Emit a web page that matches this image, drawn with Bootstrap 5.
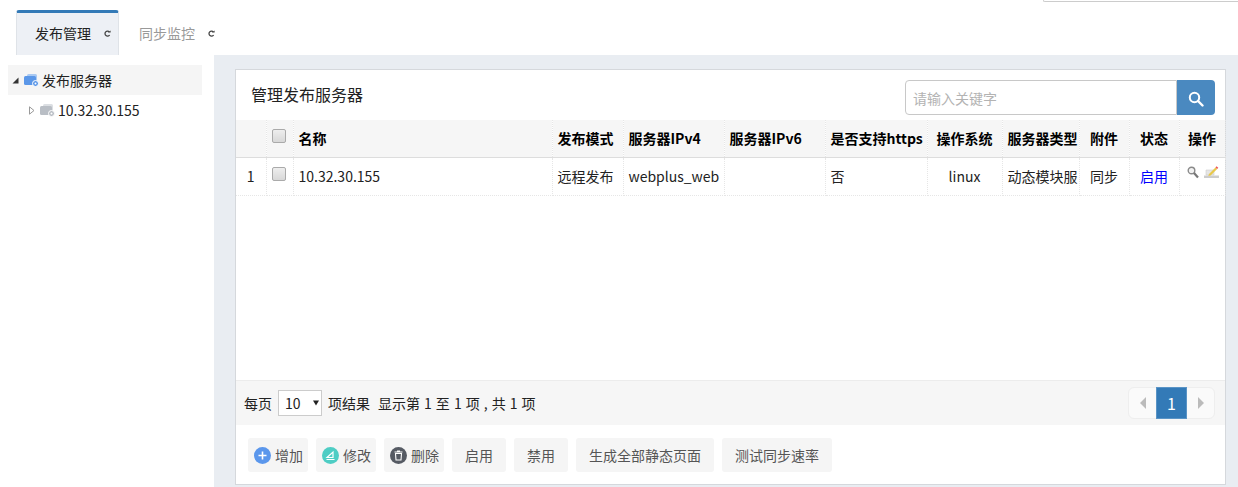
<!DOCTYPE html>
<html lang="zh-CN">
<head>
<meta charset="utf-8">
<title>发布服务器</title>
<link rel="stylesheet" href="https://cdn.jsdelivr.net/npm/bootstrap@5.3.0/dist/css/bootstrap.min.css">
<style>
html,body{height:487px;overflow:hidden;}
body{font-family:"Noto Sans CJK SC","Open Sans",sans-serif;font-size:14px;color:#222;background:#fff;}
.top-stub{width:195px;height:2px;margin-left:auto;border:1px solid #ccc;border-top:0;border-right:0;border-radius:0 0 0 3px;}
.tab-strip{height:53px;padding:8px 0 0 16px;}
.tab-item{height:45px;width:103px;padding:0 0 2px 18px;background:#edf0f5;border:1px solid #dfe3e8;border-top:3px solid #337ab7;border-bottom:0;border-radius:3px 3px 0 0;color:#222;}
.tab-item.off{background:#fff;border-color:transparent;color:#999;padding-left:19px;}
.tab-icon{margin-left:13px;}
.work{height:432px;}
.side{width:214px;padding:10px 12px 0 8px;flex:none;}
.tree-row{height:30px;padding-left:4px;gap:3px;}
.tree-row.sel{background:#f5f5f5;}
.tree-row.sub{padding-left:21px;height:31px;}
.tree-ico{margin-left:2px;}
.content{flex:1;background:#e9edf2;padding:14px 12px 2px 21px;min-width:0;}
.panel-box{height:416px;background:#fff;border:1px solid #d5d8dc;}
.panel-head{height:50px;padding:10px 10px 0 15px;}
.panel-title{font-size:16px;padding-top:2px;}
.search-wrap{width:310px;height:35px;}
.search-wrap .form-control{height:35px;min-width:0;font-size:14px;border-color:#c8c8c8;padding:0 7px;border-radius:4px 0 0 4px;}
.search-wrap .form-control::placeholder{color:#b3b3b3;}
.search-btn{width:38px;height:35px;background:#4a89c0;border:0;border-radius:0 4px 4px 0;padding:0;}
.grid-wrap{height:260px;}
.data-grid{table-layout:fixed;width:989px;margin:0;}
.data-grid th,.data-grid td{padding:0 0 0 5px;vertical-align:middle;white-space:nowrap;overflow:hidden;border-bottom:1px dotted #e6e6e6;border-right:1px dotted #e6e6e6;color:#222;box-shadow:none;}
.data-grid th{height:37px;background:#f6f6f6;font-weight:700;color:#000;border-bottom:1px solid #ddd;}
.data-grid td{height:38px;}
.data-grid .ctr{text-align:center;padding:0;}
.data-grid .chk-cell{padding:0 2px 0 0;}
.data-grid .st-on{color:#00f;}
.c1{width:30px}.c2{width:27px}.c3{width:259px}.c4{width:71px}.c5{width:101px}.c6{width:101px}.c7{width:102px}.c8{width:75px}.c9{width:77px}.c10,.c11{width:50px}.c12{width:46px}
.fake-check{width:14px;height:14px;margin:0 0 4px 0;border:1px solid #aaa;border-radius:2px;background:linear-gradient(#eee,#d8d8d8);appearance:none;display:block;}
.op-ico{display:flex;justify-content:center;align-items:flex-start;gap:5px;padding:0 0 7px 1px;}
.pager-bar{height:45px;background:#f6f6f6;border-top:1px solid #ececec;padding:0 10px 0 8px;gap:6px;}
.size-select{width:44px;height:26px;border:1px solid #ccc;padding:0 0 0 6px;font-size:14px;background:#fff;color:#222;gap:8px;}
.result-text{margin-left:2px;word-spacing:.9px;}
.pager-bar .pagination{margin:0;}
.pager-bar .page-link{height:32px;width:29px;padding:0;display:flex;align-items:center;justify-content:center;background:#fafafa;border-color:#eee;border-radius:0;color:#bbb;}
.pager-bar .active .page-link{width:31px;background:#337ab7;border-color:#5a94c6;color:#fff;}
.action-bar{padding:13px 0 0 12px;gap:8px;}
.act-btn{height:34px;padding:0 13px;background:#f5f5f5;border:0;border-radius:3px;color:#555;font-size:14px;gap:4px;}
.act-btn.icon-one{width:60px;padding:0 0 0 6px;}
.act-btn.plain-a{width:54px;padding:0;justify-content:center;}
</style>
</head>
<body>
<div class="top-stub"></div>
<div class="tab-strip d-flex">
  <div class="tab-item d-flex align-items-center">发布管理
    <svg class="tab-icon" width="7" height="7" viewBox="0 0 7 7"><path d="M5.600 5A2.500 2.500 0 1 1 5.400 2" fill="none" stroke="#444" stroke-width="1.300"/><path d="M4 2.600h2.600V.4z" fill="#444"/></svg>
  </div>
  <div class="tab-item off d-flex align-items-center">同步监控
    <svg class="tab-icon" width="7" height="7" viewBox="0 0 7 7"><path d="M5.600 5A2.500 2.500 0 1 1 5.400 2" fill="none" stroke="#444" stroke-width="1.300"/><path d="M4 2.600h2.600V.4z" fill="#444"/></svg>
  </div>
</div>
<div class="work d-flex">
  <div class="side">
    <div class="tree-row sel d-flex align-items-center">
      <svg width="7" height="7" viewBox="0 0 7 7"><path d="M6.500.5v6h-6z" fill="#333"/></svg>
      <svg class="tree-ico" width="15" height="13" viewBox="0 0 15 13"><rect x="3" y="0" width="10" height="8" rx="1.500" fill="#a9c9f2"/><rect x="0" y="2" width="12" height="9" rx="1.500" fill="#5b97e8"/><circle cx="11.500" cy="9.500" r="3" fill="#5b97e8" stroke="#fff"/><circle cx="11.500" cy="9.500" r="1" fill="#fff"/></svg>
      <span>发布服务器</span>
    </div>
    <div class="tree-row sub d-flex align-items-center">
      <svg width="6" height="9" viewBox="0 0 6 9"><path d="M.5.8l4.500 3.700-4.500 3.700z" fill="#fff" stroke="#999"/></svg>
      <svg class="tree-ico" width="15" height="13" viewBox="0 0 15 13"><rect x="3" y="0" width="10" height="8" rx="1.500" fill="#dcdfe3"/><rect x="0" y="2" width="12" height="9" rx="1.500" fill="#b9bec5"/><circle cx="11.500" cy="9.500" r="3" fill="#b9bec5" stroke="#fff"/><circle cx="11.500" cy="9.500" r="1" fill="#fff"/></svg>
      <span>10.32.30.155</span>
    </div>
  </div>
  <div class="content">
    <div class="panel-box">
      <div class="panel-head d-flex justify-content-between align-items-start">
        <div class="panel-title">管理发布服务器</div>
        <div class="search-wrap d-flex">
          <input class="form-control" type="text" placeholder="请输入关键字">
          <button class="search-btn flex-shrink-0" type="button" aria-label="搜索">
            <svg width="16" height="16" viewBox="0 0 16 16"><circle cx="6.500" cy="6.500" r="4.700" fill="none" stroke="#fff" stroke-width="2"/><path d="M10 10l4.500 4.500" stroke="#fff" stroke-width="2.400" stroke-linecap="round"/></svg>
          </button>
        </div>
      </div>
      <div class="grid-wrap">
        <table class="table data-grid">
          <colgroup><col class="c1"><col class="c2"><col class="c3"><col class="c4"><col class="c5"><col class="c6"><col class="c7"><col class="c8"><col class="c9"><col class="c10"><col class="c11"><col class="c12"></colgroup>
          <thead><tr>
            <th></th><th class="ctr chk-cell"><input class="fake-check mx-auto" type="checkbox"></th><th>名称</th><th>发布模式</th><th>服务器IPv4</th><th>服务器IPv6</th><th>是否支持https</th><th class="ctr">操作系统</th><th>服务器类型</th><th class="ctr">附件</th><th class="ctr">状态</th><th class="ctr">操作</th>
          </tr></thead>
          <tbody><tr>
            <td class="ctr">1</td><td class="ctr chk-cell"><input class="fake-check mx-auto" type="checkbox"></td><td>10.32.30.155</td><td>远程发布</td><td>webplus_web</td><td></td><td>否</td><td class="ctr">linux</td><td>动态模块服</td><td class="ctr">同步</td><td class="ctr st-on">启用</td>
            <td class="ctr">
              <div class="op-ico">
              <svg width="12" height="13" viewBox="0 0 12 13"><circle cx="4.500" cy="4.500" r="3.300" fill="#f2f2f2" stroke="#8a8a8a" stroke-width="1.400"/><path d="M7 7l4 4.500" stroke="#777" stroke-width="2.200"/></svg>
              <svg width="15" height="12" viewBox="0 0 15 12"><path d="M2 4h8v5H2z" fill="#e6e6e6" stroke="#ccc" stroke-width=".6"/><path d="M0 9.500h15V12H0z" fill="#ccc"/><path d="M5 8l6.500-6.500 1.600 1.600-6.500 6.500-2.300.4z" fill="#e8c84a"/><path d="M11.500 1.500l1-1.300 1.800 1.500-1.200 1.400z" fill="#e55"/></svg>
              </div>
            </td>
          </tr></tbody>
        </table>
      </div>
      <div class="pager-bar d-flex align-items-center">
        <span>每页</span>
        <div class="size-select d-flex align-items-center"><span>10</span><svg class="ms-1" width="6" height="6" viewBox="0 0 6 6"><path d="M0 .5h6L3 5.500z" fill="#222"/></svg></div>
        <span>项结果</span>
        <span class="result-text">显示第 1 至 1 项 , 共 1 项</span>
        <ul class="pagination ms-auto">
          <li class="page-item"><a class="page-link" href="#" aria-label="上一页"><svg width="6" height="12" viewBox="0 0 6 12"><path d="M6 0v12L0 6z" fill="#bbb"/></svg></a></li>
          <li class="page-item active"><a class="page-link" href="#">1</a></li>
          <li class="page-item"><a class="page-link" href="#" aria-label="下一页"><svg width="6" height="12" viewBox="0 0 6 12"><path d="M0 0v12l6-6z" fill="#bbb"/></svg></a></li>
        </ul>
      </div>
      <div class="action-bar d-flex">
        <button class="act-btn icon-one d-flex align-items-center" type="button">
          <svg width="17" height="17" viewBox="0 0 17 17"><circle cx="8.500" cy="8.500" r="8.500" fill="#5b97ec"/><path d="M8.500 4.500v8M4.500 8.500h8" stroke="#fff" stroke-width="1.600"/></svg>增加</button>
        <button class="act-btn icon-one d-flex align-items-center" type="button">
          <svg width="17" height="17" viewBox="0 0 17 17"><circle cx="8.500" cy="8.500" r="8.500" fill="#4ecdc4"/><path d="M5 10.500L11 5v5.500zM4.500 12.500h8" stroke="#fff" stroke-width="1.200" fill="none"/></svg>修改</button>
        <button class="act-btn icon-one d-flex align-items-center" type="button">
          <svg width="17" height="17" viewBox="0 0 17 17"><circle cx="8.500" cy="8.500" r="8.500" fill="#555a63"/><path d="M5.500 6.500h6l-.5 6.500H6zM4.500 5h8M7 4h3" stroke="#fff" stroke-width="1.100" fill="none"/></svg>删除</button>
        <button class="act-btn plain-a d-flex align-items-center" type="button">启用</button>
        <button class="act-btn plain-a d-flex align-items-center" type="button">禁用</button>
        <button class="act-btn d-flex align-items-center" type="button">生成全部静态页面</button>
        <button class="act-btn d-flex align-items-center" type="button">测试同步速率</button>
      </div>
    </div>
  </div>
</div>
<script src="https://cdn.jsdelivr.net/npm/bootstrap@5.3.0/dist/js/bootstrap.bundle.min.js"></script>
</body>
</html>
